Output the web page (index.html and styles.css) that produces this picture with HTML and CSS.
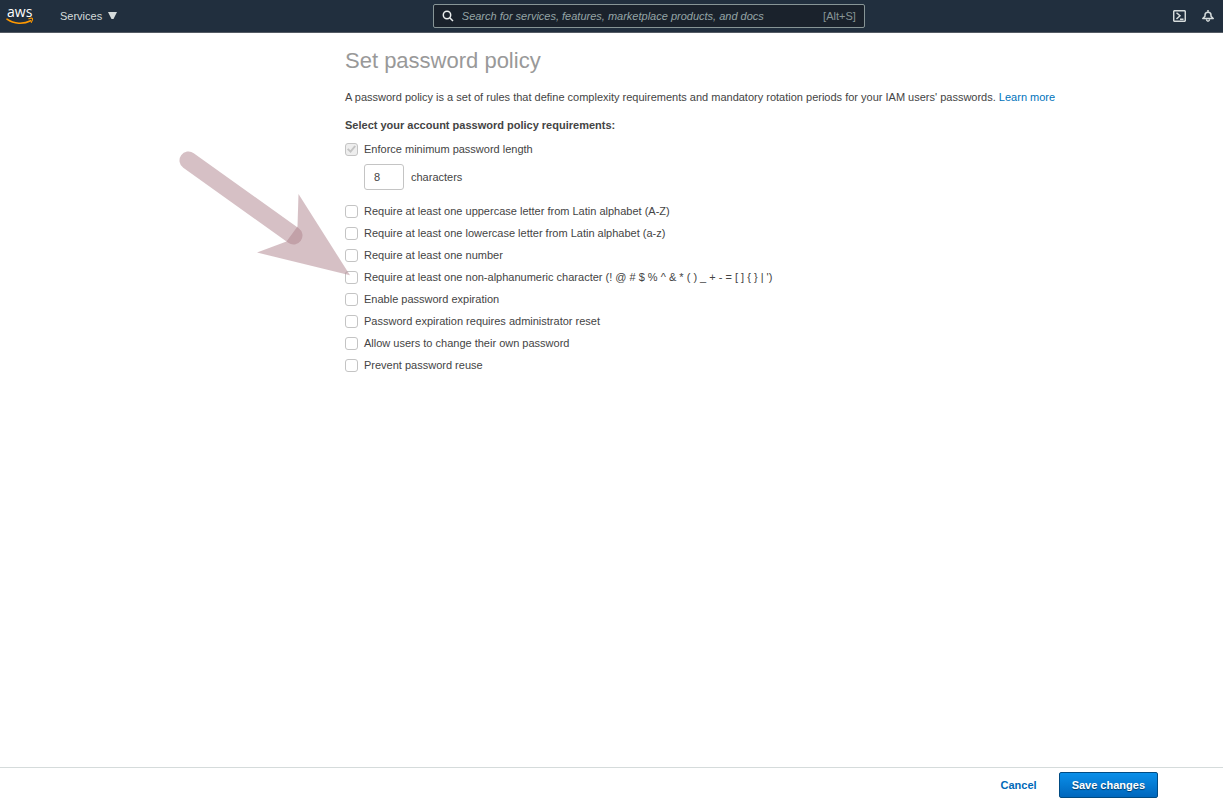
FILE: index.html
```html
<!DOCTYPE html>
<html lang="en">
<head>
<meta charset="utf-8">
<meta name="viewport" content="width=device-width, initial-scale=1">
<title>Set password policy</title>
<link rel="stylesheet" href="styles.css">
</head>
<body>
<header class="topbar">
  <div class="topbar-start">
    <a class="logo" href="#" aria-label="AWS home">
      <svg width="28" height="28" viewBox="0 0 28 28">
        <text class="logo-text" x="1" y="15">aws</text>
        <path d="M1 17.200C8 22.200 17.500 22.400 24.700 18.800" fill="none" stroke="#f90" stroke-width="1.600" stroke-linecap="round"/>
        <path d="M22.800 16.800C24.500 16 26.300 16.100 26.500 16.500C26.700 17.200 26.300 19.200 25.300 20.300" fill="none" stroke="#f90" stroke-width="1.100" stroke-linecap="round"/>
      </svg>
    </a>
    <button class="services" type="button">Services
      <svg width="9" height="7" viewBox="0 0 9 7"><path d="M0 0H9L5.500 7H3.500Z" fill="#d5dbdb"/></svg>
    </button>
  </div>
  <label class="search">
    <svg width="12" height="12" viewBox="0 0 12 12" fill="none" stroke="#eaeded" stroke-width="1.500"><circle cx="5" cy="5" r="3.700"/><path d="M7.700 7.700L11 11"/></svg>
    <input class="search-input" type="text" aria-label="Search" placeholder="Search for services, features, marketplace products, and docs">
    <span class="shortcut">[Alt+S]</span>
  </label>
  <div class="topbar-end">
    <button class="icon-button" type="button" aria-label="CloudShell">
      <svg width="13" height="12" viewBox="0 0 13 12" fill="none" stroke="#d5dbdb" stroke-width="1.500"><rect x=".7" y=".7" width="11.600" height="10.600" rx="1"/><path d="M3.500 2.700L7 5.800L3.500 9M7 9.300H10.500"/></svg>
    </button>
    <button class="icon-button" type="button" aria-label="Notifications">
      <svg width="12" height="12" viewBox="0 0 12 12" fill="none" stroke="#d5dbdb" stroke-width="1.500" stroke-linejoin="round"><path d="M6 0V2M.8 8.500L3 6.200V5C3 1.200 9 1.200 9 5V6.200L11.200 8.500Z"/><path d="M4.500 9.200C4.600 11.800 7.400 11.800 7.500 9.200"/></svg>
    </button>
  </div>
</header>

<main class="content">
  <h1 class="title">Set password policy</h1>
  <p class="intro">A password policy is a set of rules that define complexity requirements and mandatory rotation periods for your IAM users' passwords. <a class="link" href="#">Learn more</a></p>
  <form id="policy">
    <h2 class="subtitle">Select your account password policy requirements:</h2>
    <label class="option"><input class="check" type="checkbox" checked disabled>Enforce minimum password length</label>
    <label class="length"><input class="length-input" type="text" value="8">characters</label>
    <div class="options">
      <label class="option"><input class="check" type="checkbox">Require at least one uppercase letter from Latin alphabet (A-Z)</label>
      <label class="option"><input class="check" type="checkbox">Require at least one lowercase letter from Latin alphabet (a-z)</label>
      <label class="option"><input class="check" type="checkbox">Require at least one number</label>
      <label class="option"><input class="check" type="checkbox">Require at least one non-alphanumeric character (! @ # $ % ^ &amp; * ( ) _ + - = [ ] { } | ')</label>
      <label class="option"><input class="check" type="checkbox">Enable password expiration</label>
      <label class="option"><input class="check" type="checkbox">Password expiration requires administrator reset</label>
      <label class="option"><input class="check" type="checkbox">Allow users to change their own password</label>
      <label class="option"><input class="check" type="checkbox">Prevent password reuse</label>
    </div>
  </form>
  <svg class="pointer" width="172" height="126" viewBox="0 0 172 126" aria-hidden="true">
    <path d="M9.500 10.500L114.500 85.500" stroke="#ae828b" stroke-opacity=".5" stroke-width="18" stroke-linecap="round"/>
    <path d="M119.500 44L171 125.300L78 102.500L107.500 91.500L118.500 76.500Z" fill="#ae828b" fill-opacity=".5"/>
  </svg>
</main>

<footer class="actions">
  <a class="cancel" href="#">Cancel</a>
  <button class="save" type="submit" form="policy">Save changes</button>
</footer>
</body>
</html>
```
FILE: styles.css
```css
* {
  box-sizing: border-box;
}

body {
  display: flex;
  flex-direction: column;
  min-height: 100vh;
  margin: 0;
  background: #fff;
  color: #444;
  font: 11px/16px "Liberation Sans", Arial, sans-serif;
}

button,
input {
  font: inherit;
}

svg {
  display: block;
  flex: none;
}

.topbar {
  display: grid;
  grid-template-columns: 11fr 432px 9fr;
  align-items: center;
  height: 33px;
  padding: 0 9px 1px 6px;
  border-bottom: 1px solid #545b64;
  background: #212f3e;
}

.topbar-start,
.topbar-end {
  display: flex;
  align-items: center;
}

.topbar-start {
  gap: 26px;
}

.topbar-end {
  justify-content: flex-end;
  gap: 16px;
}

.logo-text {
  fill: #fff;
  font: 14px "Open Sans", sans-serif;
}

.services,
.icon-button {
  display: flex;
  align-items: center;
  gap: 6px;
  padding: 0;
  border: 0;
  background: none;
  color: #d5dbdb;
}

.search {
  display: flex;
  align-items: center;
  gap: 8px;
  height: 24px;
  padding: 0 8px;
  border: 1px solid #879596;
  border-radius: 2px;
  background: #1a222c;
}

.search-input {
  flex: 1;
  min-width: 0;
  padding: 0;
  border: 0;
  outline: 0;
  background: none;
  color: #fff;
}

.search-input::placeholder {
  color: #95a5a6;
  font-style: italic;
}

.shortcut {
  color: #879596;
}

.content {
  position: relative;
  flex: 1;
  padding: 14px 65px 0 345px;
}

.title {
  margin: 0 0 15px;
  color: #999;
  font-size: 22px;
  font-weight: 400;
  line-height: 27px;
}

.intro {
  margin: 0 0 12px;
}

.link {
  color: #0073bb;
  text-decoration: none;
}

.subtitle {
  margin: 0 0 5px;
  font-size: 11px;
  font-weight: 700;
}

.option {
  display: flex;
  align-items: center;
  gap: 6px;
  min-height: 22px;
}

.check {
  flex: none;
  width: 13px;
  height: 13px;
  margin: 0;
  border: 1px solid #c4c4c4;
  border-radius: 3px;
  background: #fff;
  appearance: none;
}

.check:disabled {
  display: grid;
  place-items: center;
  background: #eee;
}

.check:disabled::before {
  width: 9px;
  height: 8px;
  background: #c4c4c4;
  clip-path: polygon(0 55%, 15% 40%, 38% 65%, 82% 5%, 100% 20%, 40% 100%);
  content: "";
}

.length {
  display: flex;
  align-items: center;
  gap: 7px;
  margin: 4px 0 10px 19px;
}

.length-input {
  width: 40px;
  height: 26px;
  padding: 0 9px;
  border: 1px solid #c4c4c4;
  border-radius: 3px;
  color: #444;
}

.pointer {
  position: absolute;
  top: 117px;
  left: 179px;
  pointer-events: none;
}

.actions {
  display: flex;
  align-items: center;
  justify-content: flex-end;
  gap: 22px;
  height: 32px;
  padding: 3px 65px 0 0;
  border-top: 1px solid #d5dbdb;
  font-weight: 700;
}

.cancel {
  color: #0069b8;
  text-decoration: none;
}

.save {
  height: 26px;
  padding: 0 12px;
  border: 1px solid #004b83;
  border-radius: 2px;
  background: linear-gradient(#0a8fe9, #0067bd);
  color: #fff;
  text-shadow: 0 1px 1px #003a66;
}
```
